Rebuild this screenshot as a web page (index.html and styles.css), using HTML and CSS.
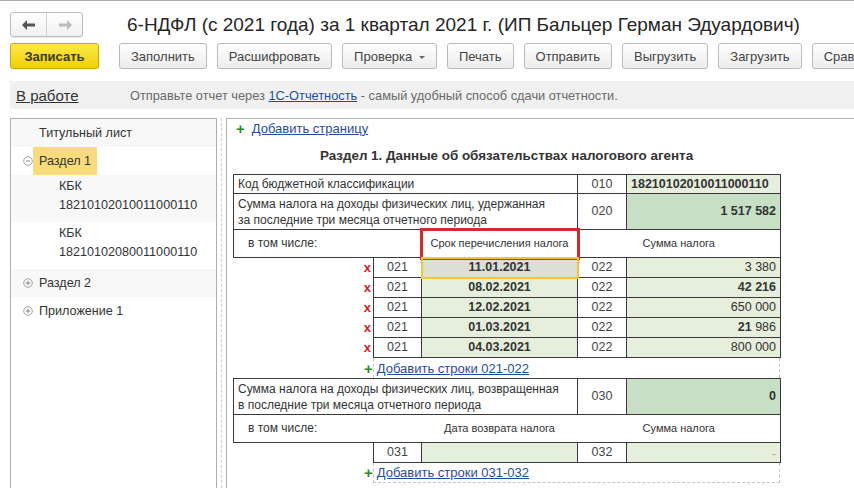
FILE: index.html
```html
<!DOCTYPE html>
<html lang="ru">
<head>
<meta charset="utf-8">
<title>6-НДФЛ</title>
<link rel="stylesheet" href="styles.css">
</head>
<body>
<div class="window">
  <header class="header">
    <div class="nav">
      <span class="nav-btn">
        <svg width="14" height="10" viewBox="0 0 14 10"><path d="M5 0 L0 5 L5 10 L5 6.5 L13 6.5 L13 3.5 L5 3.5 Z" fill="#555"/></svg>
      </span>
      <span class="nav-btn">
        <svg width="14" height="10" viewBox="0 0 14 10"><path d="M9 0 L14 5 L9 10 L9 6.5 L1 6.5 L1 3.5 L9 3.5 Z" fill="#bbb"/></svg>
      </span>
    </div>
    <h1 class="title">6-НДФЛ (с 2021 года) за 1 квартал 2021 г. (ИП Бальцер Герман Эдуардович)</h1>
  </header>

  <div class="toolbar">
    <button class="btn btn-primary">Записать</button>
    <button class="btn">Заполнить</button>
    <button class="btn">Расшифровать</button>
    <button class="btn">Проверка <span class="caret"></span></button>
    <button class="btn">Печать</button>
    <button class="btn">Отправить</button>
    <button class="btn">Выгрузить</button>
    <button class="btn">Загрузить</button>
    <button class="btn">Сравнить</button>
  </div>

  <div class="status">
    <span class="status-state">В работе</span>
    <span class="status-msg">Отправьте отчет через <a class="link">1С-Отчетность</a> - самый удобный способ сдачи отчетности.</span>
  </div>

  <div class="main">
    <aside class="tree">
      <div class="tree-row shade"><span class="tree-label first">Титульный лист</span></div>
      <div class="tree-row"><span class="tree-icon"><svg width="10" height="10" viewBox="0 0 10 10"><circle cx="5" cy="5" r="4.3" fill="none" stroke="#999" stroke-width="0.9"/><path d="M2.8 5 H7.2" stroke="#888" stroke-width="1"/></svg></span><span class="tree-label selected">Раздел 1</span></div>
      <div class="tree-row shade sub"><span>КБК<br>18210102010011000110</span></div>
      <div class="tree-row sub"><span>КБК<br>18210102080011000110</span></div>
      <div class="tree-row shade"><span class="tree-icon"><svg width="10" height="10" viewBox="0 0 10 10"><circle cx="5" cy="5" r="4.3" fill="none" stroke="#999" stroke-width="0.9"/><path d="M2.8 5 H7.2 M5 2.8 V7.2" stroke="#888" stroke-width="1"/></svg></span><span class="tree-label">Раздел 2</span></div>
      <div class="tree-row"><span class="tree-icon"><svg width="10" height="10" viewBox="0 0 10 10"><circle cx="5" cy="5" r="4.3" fill="none" stroke="#999" stroke-width="0.9"/><path d="M2.8 5 H7.2 M5 2.8 V7.2" stroke="#888" stroke-width="1"/></svg></span><span class="tree-label">Приложение 1</span></div>
    </aside>
    <div class="splitter"></div>
    <section class="content">
      <div class="addpage"><span class="plus">+</span><a class="link">Добавить страницу</a></div>
      <div class="sheet">
        <div class="sheet-title">Раздел 1. Данные об обязательствах налогового агента</div>
        <table class="grid">
          <colgroup><col class="c1"><col class="c2"><col class="c3"><col class="c4"><col class="c5"></colgroup>
          <tr class="r19">
            <td colspan="3" class="b txt">Код бюджетной классификации</td>
            <td class="b code">010</td>
            <td class="b val kbk">18210102010011000110</td>
          </tr>
          <tr class="r36">
            <td colspan="3" class="b txt">Сумма налога на доходы физических лиц, удержанная<br>за последние три месяца отчетного периода</td>
            <td class="b code">020</td>
            <td class="b num dark strong">1 517 582</td>
          </tr>
          <tr class="r28">
            <td colspan="2" class="bl bb sub-label">в том числе:</td>
            <td class="bb head marked">Срок перечисления налога</td>
            <td colspan="2" class="br bb head">Сумма налога</td>
          </tr>
          <tr class="r20">
            <td class="del">x</td>
            <td class="b code">021</td>
            <td class="b date current">11.01.2021</td>
            <td class="b code">022</td>
            <td class="b num light">3 380</td>
          </tr>
          <tr class="r20">
            <td class="del">x</td>
            <td class="b code">021</td>
            <td class="b date">08.02.2021</td>
            <td class="b code">022</td>
            <td class="b num light strong">42 216</td>
          </tr>
          <tr class="r20">
            <td class="del">x</td>
            <td class="b code">021</td>
            <td class="b date">12.02.2021</td>
            <td class="b code">022</td>
            <td class="b num light">650 000</td>
          </tr>
          <tr class="r20">
            <td class="del">x</td>
            <td class="b code">021</td>
            <td class="b date">01.03.2021</td>
            <td class="b code">022</td>
            <td class="b num light"><b>21</b> 986</td>
          </tr>
          <tr class="r20">
            <td class="del">x</td>
            <td class="b code">021</td>
            <td class="b date">04.03.2021</td>
            <td class="b code">022</td>
            <td class="b num light">800 000</td>
          </tr>
        </table>
        <div class="addrows"><span class="plus plus-out">+</span><a class="link">Добавить строки 021-022</a></div>
        <table class="grid">
          <colgroup><col class="c1"><col class="c2"><col class="c3"><col class="c4"><col class="c5"></colgroup>
          <tr class="r36">
            <td colspan="3" class="b txt">Сумма налога на доходы физических лиц, возвращенная<br>в последние три месяца отчетного периода</td>
            <td class="b code">030</td>
            <td class="b num dark strong">0</td>
          </tr>
          <tr class="r28">
            <td colspan="2" class="bl bb sub-label">в том числе:</td>
            <td class="bb head">Дата возврата налога</td>
            <td colspan="2" class="br bb head">Сумма налога</td>
          </tr>
          <tr class="r20">
            <td class="del"></td>
            <td class="b code">031</td>
            <td class="b light"></td>
            <td class="b code">032</td>
            <td class="b num light dash">-</td>
          </tr>
        </table>
        <div class="addrows last"><span class="plus plus-out">+</span><a class="link">Добавить строки 031-032</a></div>
      </div>
    </section>
  </div>
</div>
</body>
</html>
```

FILE: styles.css
```css
* { box-sizing: border-box; }

html, body {
  margin: 0;
  padding: 0;
  background: #fff;
}

body {
  font-family: "Liberation Sans", Arial, sans-serif;
  color: #333;
  width: 854px;
  height: 488px;
  overflow: hidden;
}

.window {
  border-top: 1px solid #a9a9a9;
  height: 488px;
  display: flex;
  flex-direction: column;
}

.header {
  display: flex;
  align-items: center;
  height: 40px;
  padding: 7px 0 0 10px;
}

.nav {
  display: flex;
  width: 73px;
  height: 25px;
  border: 1px solid #bdbdbd;
  border-radius: 3px;
  background: linear-gradient(#fff, #f0f0f0);
  box-shadow: 0 1px 1px rgba(0,0,0,0.08);
}

.nav-btn {
  flex: 1;
  display: flex;
  align-items: center;
  justify-content: center;
}

.nav-btn + .nav-btn {
  border-left: 1px solid #d4d4d4;
}

.title {
  margin: 0 0 0 44px;
  font-size: 19px;
  font-weight: normal;
  color: #262626;
  white-space: nowrap;
}

.toolbar {
  display: flex;
  gap: 10px;
  padding-left: 10px;
  margin-top: 2px;
  height: 26px;
  white-space: nowrap;
  overflow: hidden;
}

.btn {
  font-family: "Liberation Sans", Arial, sans-serif;
  font-size: 13px;
  color: #444;
  height: 26px;
  padding: 0 11px;
  border: 1px solid #bcbcbc;
  border-radius: 3px;
  background: linear-gradient(#ffffff, #ececec);
  box-shadow: 0 1px 1px rgba(0,0,0,0.08);
  flex-shrink: 0;
}

.btn-primary {
  width: 89px;
  font-weight: bold;
  color: #3a3a1a;
  border-color: #c9ab00;
  background: linear-gradient(#fbe949, #f2d000);
  margin-right: 10px;
}

.caret {
  display: inline-block;
  width: 0;
  height: 0;
  border-left: 3px solid transparent;
  border-right: 3px solid transparent;
  border-top: 3px solid #666;
  vertical-align: middle;
  margin-left: 3px;
}

.status {
  margin: 12px 0 0 10px;
  height: 28px;
  background: #f0f0f0;
  display: flex;
  align-items: center;
  padding-left: 6px;
}

.status-state {
  font-size: 15px;
  color: #333;
  text-decoration: underline;
  width: 114px;
}

.status-msg {
  font-size: 12.8px;
  color: #6a6a6a;
}

.link {
  color: #1d4f9c;
  text-decoration: underline;
  cursor: pointer;
}

.main {
  display: flex;
  margin-top: 9px;
  flex: 1;
  min-height: 0;
}

.tree {
  margin-left: 10px;
  width: 207px;
  border: 1px solid #b0b0b0;
  border-bottom: none;
  font-size: 12.6px;
  color: #333;
}

.tree-row {
  display: flex;
  align-items: center;
  min-height: 28px;
  padding-left: 12px;
  line-height: 18px;
}

.tree-row.shade {
  background: #f8f8f8;
}

.tree-row.sub {
  padding: 2px 0 7px 48px;
  line-height: 19px;
  font-size: 12.6px;
  align-items: flex-start;
  min-height: 0;
}

.tree-icon {
  width: 10px;
  display: flex;
  align-items: center;
}

.tree-label {
  margin-left: 0;
  padding: 5px 6px;
}

.tree-label.first {
  margin-left: 10px;
}

.tree-label.selected {
  background: #f8dc7c;
}

.splitter {
  width: 1px;
  margin: 0 4px;
  border-left: 1px dashed #cfcfcf;
}

.content {
  flex: 1;
  border-left: 1px solid #b0b0b0;
  border-top: 1px solid #b0b0b0;
}

.addpage {
  display: flex;
  align-items: center;
  height: 18px;
  margin-top: 0;
  padding-left: 9px;
  font-size: 13px;
}

.plus {
  color: #2a8a2a;
  font-weight: bold;
  font-size: 15px;
  margin-right: 7px;
}

.sheet {
  margin-left: 6px;
  width: 547px;
}

.sheet-title {
  text-align: center;
  font-weight: bold;
  font-size: 13.4px;
  color: #333;
  padding: 11px 0 11px;
}

.grid {
  width: 547px;
  table-layout: fixed;
  border-collapse: collapse;
  font-size: 12px;
  color: #333;
}

.c1 { width: 140px; }
.c2 { width: 48px; }
.c3 { width: 156px; }
.c4 { width: 49px; }
.c5 { width: 154px; }

.grid td {
  padding: 0 4px;
  white-space: nowrap;
  overflow: visible;
  line-height: 15px;
}

.r19 td { height: 19px; }
.r36 td { height: 36px; }
.r28 td { height: 28px; }
.r20 td { height: 20px; }

.b { border: 1px solid #3a3a3a; }
.bl { border-left: 1px solid #3a3a3a; }
.br { border-right: 1px solid #3a3a3a; }
.bb { border-bottom: 1px solid #3a3a3a; }

.txt { text-align: left; line-height: 16px !important; }
.code { text-align: center; font-size: 12.5px; color: #444; }
.val { font-weight: bold; }
.kbk { background: #e6efdd; text-align: left; font-size: 12.5px; }
.num { text-align: right; font-size: 12.5px; }
.strong { font-weight: bold; }
.dark { background: #c7dfc5; }
.light { background: #e6efdc; }
.date { background: #e6efdc; text-align: center; font-weight: bold; font-size: 12.5px; }

.sub-label { padding-left: 14px !important; }
.head { text-align: center; font-size: 11px; }

.marked {
  outline: 3px solid #d32a2a;
  outline-offset: -1px;
}

.current {
  background: #dcdfd4;
  outline: 2px solid #f0c633;
  outline-offset: -1px;
}

.del {
  text-align: right;
  color: #d41c1c;
  font-weight: bold;
  font-size: 13px;
  padding-right: 2px !important;
}

.dash { color: #aaa; vertical-align: bottom; }

.addrows {
  margin-left: 140px;
  width: 407px;
  height: 20px;
  display: flex;
  align-items: center;
  border-left: 1px dashed #c4c4c4;
  border-right: 1px dashed #c4c4c4;
  font-size: 13px;
  padding-left: 3px;
}

.addrows.last {
  border-bottom: 1px dashed #c4c4c4;
}

.plus-out {
  margin-left: -13px;
  margin-right: 4px;
}
```
